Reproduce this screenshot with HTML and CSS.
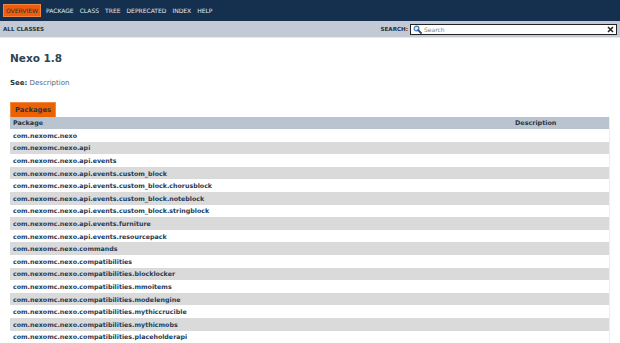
FILE: index.html
```html
<!DOCTYPE html>
<html lang="en">
  <head>
    <meta charset="UTF-8" />
    <title>Overview (Nexo 1.8)</title>
    <link rel="stylesheet" href="styles.css">
  </head>
  <body>
    <header>
      <div class="topNav">
        <ul class="navList">
          <li class="navBarCell1Rev">Overview</li>
          <li><a href="#">Package</a></li>
          <li><a href="#">Class</a></li>
          <li><a href="#">Tree</a></li>
          <li><a href="#">Deprecated</a></li>
          <li><a href="#">Index</a></li>
          <li><a href="#">Help</a></li>
        </ul>
      </div>
      <div class="subNav">
        <a class="allClasses" href="#">All Classes</a>
        <div class="navListSearch">
          <label for="search">Search:</label>
          <div class="searchBox">
            <svg class="glass" width="9" height="9" viewBox="0 0 9 9">
              <circle cx="3.5" cy="3.5" r="2.4" fill="#dbe9f6" stroke="#3f79b8" stroke-width="1.2"/>
              <path d="M5.2 5.2 L8 8" stroke="#244f86" stroke-width="1.8" stroke-linecap="round"/>
            </svg>
            <input type="text" id="search" placeholder="Search" />
            <svg class="reset" width="7" height="7" viewBox="0 0 7 7">
              <path d="M1 1 L6 6 M6 1 L1 6" stroke="#222" stroke-width="1.5"/>
            </svg>
          </div>
        </div>
      </div>
    </header>

    <main class="content">
      <h1 class="title">Nexo 1.8</h1>
      <p class="see"><b>See:</b> <a href="#">Description</a></p>

      <div class="overviewSummary">
        <div class="caption">Packages</div>
        <table>
          <tr>
            <th class="colFirst">Package</th>
            <th class="colLast">Description</th>
          </tr>
          <tr class="altColor"><td class="colFirst"><a href="#">com.nexomc.nexo</a></td><td></td></tr>
          <tr class="rowColor"><td class="colFirst"><a href="#">com.nexomc.nexo.api</a></td><td></td></tr>
          <tr class="altColor"><td class="colFirst"><a href="#">com.nexomc.nexo.api.events</a></td><td></td></tr>
          <tr class="rowColor"><td class="colFirst"><a href="#">com.nexomc.nexo.api.events.custom_block</a></td><td></td></tr>
          <tr class="altColor"><td class="colFirst"><a href="#">com.nexomc.nexo.api.events.custom_block.chorusblock</a></td><td></td></tr>
          <tr class="rowColor"><td class="colFirst"><a href="#">com.nexomc.nexo.api.events.custom_block.noteblock</a></td><td></td></tr>
          <tr class="altColor"><td class="colFirst"><a href="#">com.nexomc.nexo.api.events.custom_block.stringblock</a></td><td></td></tr>
          <tr class="rowColor"><td class="colFirst"><a href="#">com.nexomc.nexo.api.events.furniture</a></td><td></td></tr>
          <tr class="altColor"><td class="colFirst"><a href="#">com.nexomc.nexo.api.events.resourcepack</a></td><td></td></tr>
          <tr class="rowColor"><td class="colFirst"><a href="#">com.nexomc.nexo.commands</a></td><td></td></tr>
          <tr class="altColor"><td class="colFirst"><a href="#">com.nexomc.nexo.compatibilities</a></td><td></td></tr>
          <tr class="rowColor"><td class="colFirst"><a href="#">com.nexomc.nexo.compatibilities.blocklocker</a></td><td></td></tr>
          <tr class="altColor"><td class="colFirst"><a href="#">com.nexomc.nexo.compatibilities.mmoitems</a></td><td></td></tr>
          <tr class="rowColor"><td class="colFirst"><a href="#">com.nexomc.nexo.compatibilities.modelengine</a></td><td></td></tr>
          <tr class="altColor"><td class="colFirst"><a href="#">com.nexomc.nexo.compatibilities.mythiccrucible</a></td><td></td></tr>
          <tr class="rowColor"><td class="colFirst"><a href="#">com.nexomc.nexo.compatibilities.mythicmobs</a></td><td></td></tr>
          <tr class="altColor"><td class="colFirst"><a href="#">com.nexomc.nexo.compatibilities.placeholderapi</a></td><td></td></tr>
        </table>
      </div>
    </main>
  </body>
</html>
```

FILE: styles.css
```css
body {
  margin: 0;
  font-family: "DejaVu Sans", Arial, sans-serif;
  font-size: 7px;
  color: #353833;
  background: #fff;
}
a {
  color: #4a6782;
  text-decoration: none;
}

.topNav {
  background-color: #14304e;
  height: 21px;
  display: flex;
  align-items: center;
}
.navList {
  list-style: none;
  margin: 0;
  padding: 0 0 0 3px;
  display: flex;
  align-items: center;
  text-transform: uppercase;
  font-size: 6px;
}
.navList li {
  padding: 0 3px;
}
.navList a {
  color: #e4e8ee;
}
.navBarCell1Rev {
  background-color: #ef5c0b;
  color: #253441;
  height: 13px;
  line-height: 11px;
  border: 1px solid #f1873f;
  box-sizing: border-box;
}
.navList li.navBarCell1Rev {
  padding: 0 2px;
  margin-right: 2px;
}

.subNav {
  background-color: #c3cad5;
  height: 16px;
  display: flex;
  align-items: center;
  justify-content: space-between;
  padding: 0 3px;
  border-bottom: 1px solid #e6e9ee;
}
.allClasses {
  color: #253441;
  font-weight: bold;
  font-size: 5.6px;
  text-transform: uppercase;
}
.navListSearch {
  display: flex;
  align-items: center;
  gap: 2px;
}
.navListSearch label {
  font-weight: bold;
  font-size: 5.6px;
  text-transform: uppercase;
  color: #253441;
}
.searchBox {
  width: 207px;
  height: 11px;
  box-sizing: border-box;
  border: 1px solid #222;
  background: #fff;
  display: flex;
  align-items: center;
  padding: 0 2px;
  gap: 2px;
}
.searchBox input {
  flex: 1;
  border: none;
  outline: none;
  padding: 0;
  height: 8px;
  font-family: "DejaVu Sans", Arial, sans-serif;
  font-size: 6px;
  background: transparent;
}
.searchBox input::placeholder {
  color: #7c7f84;
}

.content {
  padding: 0 10px;
}
.title {
  color: #2c4557;
  font-size: 10.5px;
  margin: 13px 0 0;
  line-height: 14px;
}
.see {
  margin: 14px 0 0;
  font-size: 7px;
  line-height: 9px;
}
.see b {
  color: #253441;
}

.overviewSummary {
  margin-top: 14px;
}
.caption {
  width: fit-content;
  background-color: #ee6103;
  color: #253441;
  font-weight: bold;
  font-size: 6.8px;
  height: 15px;
  line-height: 15px;
  padding: 0 4px;
  border: 1px solid #f08a45;
  border-bottom: none;
  box-sizing: border-box;
}
table {
  width: 600px;
  border-collapse: collapse;
  border-right: 1px solid #eeeeee;
}
th {
  background-color: #bac4d1;
  color: #253441;
  font-weight: bold;
  font-size: 6.4px;
  text-align: left;
  height: 12px;
  padding: 0 3px;
}
th.colLast {
  width: 91px;
}
td {
  height: 12.6px;
  padding: 0 3px;
  font-size: 6.3px;
  font-weight: bold;
  box-sizing: border-box;
}
td a {
  color: #1f3a55;
}
.altColor {
  background-color: #ffffff;
}
.rowColor {
  background-color: #dadada;
}
```
